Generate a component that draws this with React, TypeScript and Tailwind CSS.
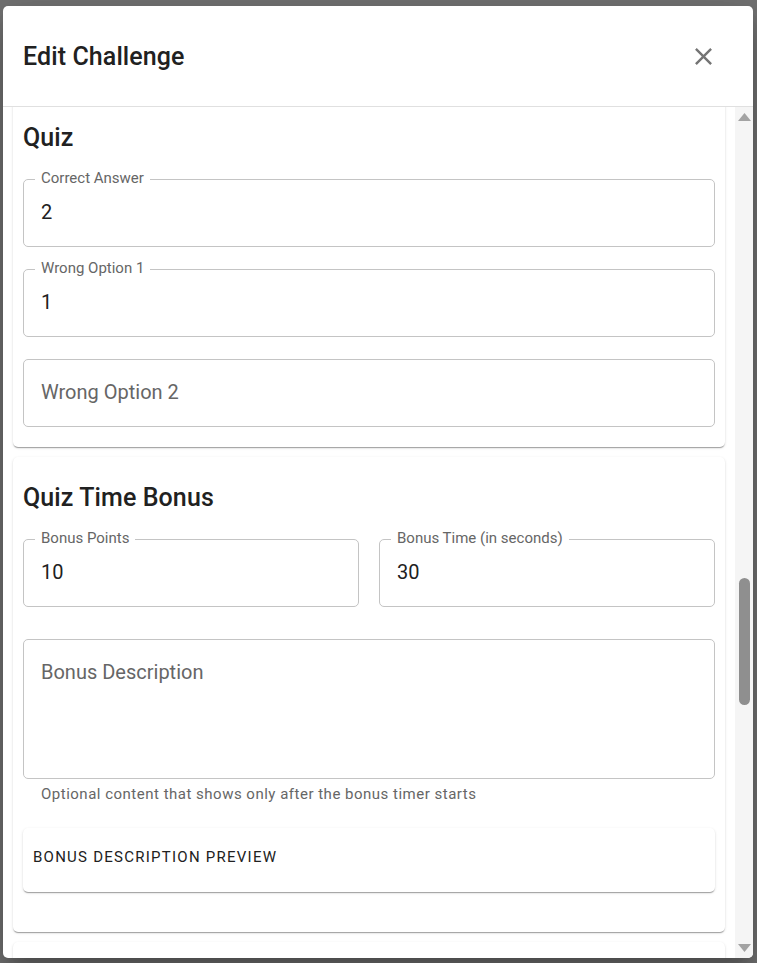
import React from "react";

function Field({
  label,
  value,
  placeholder,
}: {
  label?: string;
  value?: string;
  placeholder?: string;
}) {
  return (
    <div className="relative h-[68px] rounded-[5px] border border-[#c4c4c4] flex items-center pl-[17px] pb-[2px]">
      {label ? (
        <span className="absolute left-[11px] -top-[2.5px] -translate-y-1/2 bg-white px-[6px] text-[15px] leading-[18px] text-[#666666]">
          {label}
        </span>
      ) : null}
      {value ? (
        <span className="text-[20px] leading-[24px] text-[#212121]">{value}</span>
      ) : (
        <span className="text-[20px] leading-[24px] text-[#666666]">{placeholder}</span>
      )}
    </div>
  );
}

function CloseIcon() {
  return (
    <svg width="29" height="29" viewBox="0 0 24 24" className="block">
      <path
        fill="#757575"
        d="M19 6.41 17.59 5 12 10.59 6.41 5 5 6.41 10.59 12 5 17.59 6.41 19 12 13.41 17.59 19 19 17.59 13.41 12z"
      />
    </svg>
  );
}

export default function App() {
  return (
    <div className="w-[757px] h-[963px] bg-[#727272] pt-[6px] pl-[3px] overflow-hidden font-[Roboto,sans-serif]">
      <div className="w-[750px] h-[952px] bg-white rounded-[5px] flex flex-col overflow-hidden shadow-[0px_11px_15px_-7px_rgba(0,0,0,0.2),0px_24px_38px_3px_rgba(0,0,0,0.14),0px_9px_46px_8px_rgba(0,0,0,0.12)]">
        {/* Header */}
        <div className="h-[101px] shrink-0 border-b border-[#e0e0e0] flex items-center justify-between pl-[20px] pr-[35px]">
          <h2 className="pt-[2px] text-[25px] font-medium leading-[38px] tracking-[0.1px] text-[#212121]">Edit Challenge</h2>
          <CloseIcon />
        </div>

        {/* Body */}
        <div className="flex-1 min-h-0 flex">
          <div className="flex-1 min-w-0 overflow-hidden px-[10px]">
            {/* Card 1 */}
            <div className="-mt-[10px] rounded-[5px] bg-white px-[10px] pt-[20px] pb-[20px] shadow-[0px_2px_1px_-1px_rgba(0,0,0,0.2),0px_1px_1px_0px_rgba(0,0,0,0.14),0px_1px_3px_0px_rgba(0,0,0,0.12)]">
              <h3 className="h-[40px] text-[25px] font-medium leading-[42px] tracking-[0.1px] text-[#212121]">Quiz</h3>
              <div className="mt-[22px] flex flex-col gap-[22px]">
                <Field label="Correct Answer" value="2" />
                <Field label="Wrong Option 1" value="1" />
                <Field placeholder="Wrong Option 2" />
              </div>
            </div>

            {/* Card 2 */}
            <div className="mt-[10px] rounded-[5px] bg-white px-[10px] pt-[20px] pb-[40px] shadow-[0px_2px_1px_-1px_rgba(0,0,0,0.2),0px_1px_1px_0px_rgba(0,0,0,0.14),0px_1px_3px_0px_rgba(0,0,0,0.12)]">
              <h3 className="h-[40px] text-[25px] font-medium leading-[42px] tracking-[0.1px] text-[#212121]">Quiz Time Bonus</h3>
              <div className="mt-[22px] grid grid-cols-2 gap-[20px]">
                <Field label="Bonus Points" value="10" />
                <Field label="Bonus Time (in seconds)" value="30" />
              </div>
              <div className="mt-[32px] h-[140px] rounded-[5px] border border-[#c4c4c4] pl-[17px] pt-[20px]">
                <span className="text-[20px] leading-[24px] text-[#666666]">Bonus Description</span>
              </div>
              <p className="mt-[5px] pl-[18px] text-[15px] leading-[20px] tracking-[0.5px] text-[#666666]">
                Optional content that shows only after the bonus timer starts
              </p>
              <div className="mt-[24px] h-[64px] rounded-[5px] bg-white pl-[10px] pt-[10px] shadow-[0px_2px_1px_-1px_rgba(0,0,0,0.2),0px_1px_1px_0px_rgba(0,0,0,0.14),0px_1px_3px_0px_rgba(0,0,0,0.12)]">
                <span className="block text-[15px] leading-[38px] uppercase tracking-[0.08333em] text-[#212121]">
                  Bonus Description Preview
                </span>
              </div>
            </div>

            {/* Card 3 (cut) */}
            <div className="mt-[10px] h-[60px] rounded-[5px] bg-white shadow-[0px_2px_1px_-1px_rgba(0,0,0,0.2),0px_1px_1px_0px_rgba(0,0,0,0.14),0px_1px_3px_0px_rgba(0,0,0,0.12)]" />
          </div>

          {/* Scrollbar */}
          <div className="w-[18px] shrink-0 bg-[#f5f5f5] flex flex-col">
            <div className="h-[20px] flex items-center justify-center">
              <svg width="13" height="8" viewBox="0 0 13 8">
                <polygon points="6.5,0 13,8 0,8" fill="#a3a3a3" />
              </svg>
            </div>
            <div className="flex-1 flex justify-center">
              <div className="mt-[451px] h-[127px] w-[11px] rounded-full bg-[#8f8f8f]" />
            </div>
            <div className="h-[20px] flex items-center justify-center">
              <svg width="13" height="8" viewBox="0 0 13 8">
                <polygon points="0,0 13,0 6.5,8" fill="#a3a3a3" />
              </svg>
            </div>
          </div>
        </div>
      </div>
    </div>
  );
}
